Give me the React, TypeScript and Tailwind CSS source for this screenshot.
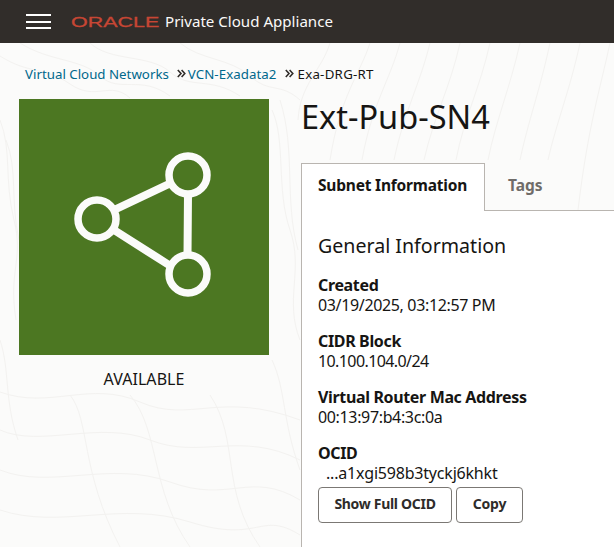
function Chevrons({ space }: { space: string }) {
  return (
    <svg className={`mb-[1px] ${space}`} width="9" height="9" viewBox="0 0 9 9" fill="none" stroke="#312d2a" strokeWidth="1.6">
      <path d="M0.8 1L4 4.5L0.8 8M4.6 1L7.8 4.5L4.6 8" />
    </svg>
  );
}

const contours = [
  "M0 56C30 75 44 66 70 84S110 80 130 98",
  "M20 43C50 62 80 58 100 76S140 74 170 96",
  "M90 43C110 62 150 54 170 72S210 76 240 96",
  "M180 43C200 60 230 58 250 76S280 82 300 100",
  "M330 43C322 70 300 84 298 120",
  "M370 43C360 74 340 96 330 160",
  "M400 43C390 80 372 104 362 160",
  "M430 43C420 84 404 112 394 160",
  "M460 43C450 88 434 116 424 160",
  "M490 43C480 88 464 118 456 160",
  "M520 43C510 88 496 120 488 160",
  "M550 43C540 90 528 122 520 160",
  "M580 43C570 90 556 124 548 160",
  "M610 43C600 90 588 126 578 210",
  "M0 120C12 150 4 180 14 220S8 270 16 320",
  "M6 140C18 170 10 200 19 240",
  "M272 110C286 140 276 190 290 230S284 300 300 340",
  "M280 100C296 150 284 200 298 250",
  "M0 340C10 370 4 400 18 440",
  "M272 360C286 390 282 420 300 470",
  "M0 392C50 410 90 380 140 402S220 390 300 420",
  "M0 430C40 448 100 420 150 440S240 430 300 460",
  "M0 470C50 490 110 460 170 482S250 470 300 500",
  "M0 510C60 530 120 500 190 522S260 510 300 535",
  "M70 395C90 420 80 470 120 547",
  "M130 395C160 430 150 490 190 547",
  "M210 395C240 440 220 490 260 547",
];

export default function App() {
  const label = "mt-[16px] font-bold tracking-[-0.35px]";
  return (
    <div className="relative flex h-[547px] w-[614px] flex-col overflow-hidden bg-[#fbfbfa] font-['Noto_Sans','Open_Sans',sans-serif] text-[#161513]">
      <svg className="absolute inset-0" width="614" height="547" fill="none" stroke="#f3f2f0" strokeWidth="1">
        {contours.map((d) => (
          <path key={d} d={d} />
        ))}
      </svg>

      <header className="relative flex h-[43px] shrink-0 items-center bg-[#312d2a] pl-[26px]">
        <div className="flex w-[25px] flex-col gap-[4.5px]">
          <span className="h-[2px] bg-white" />
          <span className="h-[2px] bg-white" />
          <span className="h-[2px] bg-white" />
        </div>
        <span className="ml-5 w-[88px] origin-left scale-x-[1.43] font-['Liberation_Sans',sans-serif] text-[15px] leading-none font-normal text-[#c74634] [-webkit-text-stroke:0.3px_#c74634]">ORACLE</span>
        <span className="ml-[6px] text-[15.1px] text-[#fbf9f8]">Private Cloud Appliance</span>
      </header>

      <nav className="relative flex items-center pt-[22px] pl-[25px] text-[13.3px] leading-[18px]">
        <a className="text-[#00688c]">Virtual Cloud Networks</a>
        <Chevrons space="ml-[8px] mr-[2px]" />
        <a className="tracking-[0.05px] text-[#00688c]">VCN-Exadata2</a>
        <Chevrons space="ml-[9px] mr-[3px]" />
        <span className="tracking-[0.25px]">Exa-DRG-RT</span>
      </nav>

      <main className="relative mt-[-1px] flex flex-1 pl-[19px]">
        <section className="mt-[17px] w-[250px]">
          <div className="flex h-[256px] items-center justify-center bg-[#4c7722]">
            <svg width="250" height="256" viewBox="0 0 250 256" fill="none" stroke="#fbfbfa" strokeWidth="7.5">
              <circle cx="169" cy="76" r="19" />
              <circle cx="78" cy="120" r="19" />
              <circle cx="169" cy="175" r="19" />
              <path d="M95 111L152 84M95 131L150 166M169 95L168.5 156" strokeWidth="8" />
            </svg>
          </div>
          <p className="mt-[14px] text-center text-[16px] leading-[20px] tracking-[0.05px]">AVAILABLE</p>
        </section>

        <section className="ml-[32px] flex flex-1 flex-col">
          <h1 className="mt-[14px] text-[32.5px] leading-[41px] font-normal">Ext-Pub-SN4</h1>
          <div className="mt-[26px] flex h-[48px] shrink-0">
            <div className="w-[184px] border border-b-0 border-[#b9b5b0] bg-white pt-[10px] pl-[16px] text-[15.5px] leading-[22px] font-bold tracking-[-0.2px]">Subnet Information</div>
            <div className="flex-1 border-b border-[#b9b5b0] pt-[11px] pl-[23px] text-[15.5px] leading-[22px] font-bold text-[#6f6c69]">Tags</div>
          </div>
          <div className="flex-1 border-l border-[#b9b5b0] bg-white pl-[16px]">
            <h2 className="pt-[21px] text-[19.6px] leading-[28px] font-normal">General Information</h2>
            <dl className="mt-[15px] text-[16px] leading-[20px]">
              <dt className="font-bold tracking-[-0.35px]">Created</dt>
              <dd className="tracking-[-0.35px]">03/19/2025, 03:12:57 PM</dd>
              <dt className={label}>CIDR Block</dt>
              <dd className="tracking-[-0.6px]">10.100.104.0/24</dd>
              <dt className={label}>Virtual Router Mac Address</dt>
              <dd className="tracking-[-0.35px]">00:13:97:b4:3c:0a</dd>
              <dt className={label}>OCID</dt>
              <dd className="pl-[8px] tracking-[-0.2px]">...a1xgi598b3tyckj6khkt</dd>
            </dl>
            <div className="mt-[4px] flex gap-1">
              <button className="h-[36px] w-[134px] rounded-[4px] border border-[#7b7874] bg-white pb-[3px] text-[14px] font-bold tracking-[-0.3px] text-[#2e2c2a]">Show Full OCID</button>
              <button className="h-[36px] w-[67px] rounded-[4px] border border-[#7b7874] bg-white pb-[3px] text-[14px] font-bold tracking-[-0.2px] text-[#2e2c2a]">Copy</button>
            </div>
          </div>
        </section>
      </main>
    </div>
  );
}
